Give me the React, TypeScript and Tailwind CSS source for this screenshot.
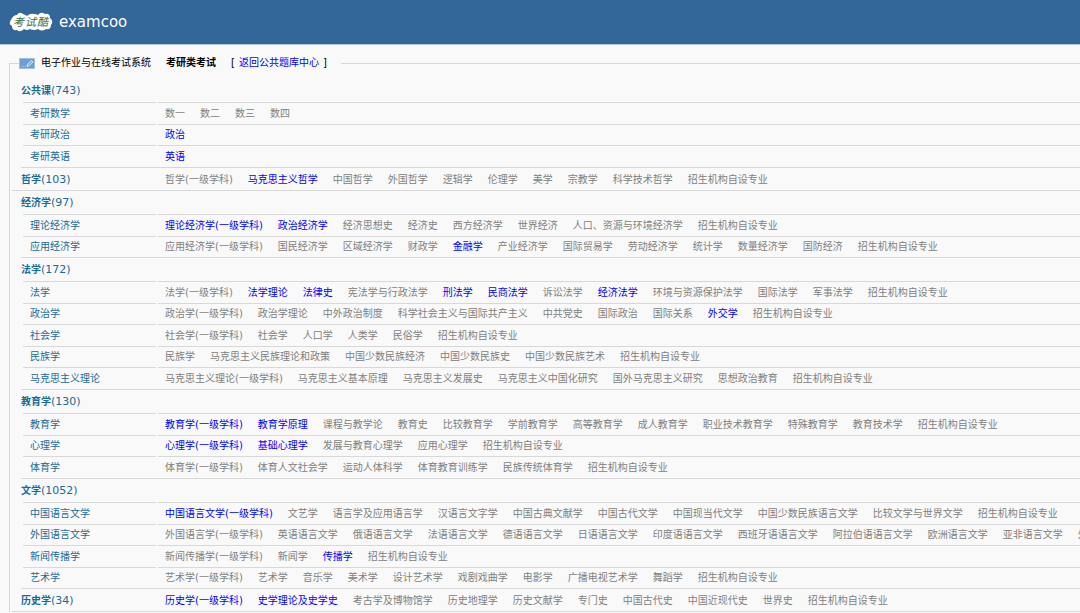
type Item = string;

type Category = {
  name: string;
  count: number;
  items?: Item[];
  subjects?: { name: string; items: Item[] }[];
};

// a leading * marks a subject that already has papers and can be opened
const categories: Category[] = [
  {
    name: "公共课",
    count: 743,
    subjects: [
      { name: "考研数学", items: ["数一", "数二", "数三", "数四"] },
      { name: "考研政治", items: ["*政治"] },
      { name: "考研英语", items: ["*英语"] },
    ],
  },
  {
    name: "哲学",
    count: 103,
    items: ["哲学(一级学科)", "*马克思主义哲学", "中国哲学", "外国哲学", "逻辑学", "伦理学", "美学", "宗教学", "科学技术哲学", "招生机构自设专业"],
  },
  {
    name: "经济学",
    count: 97,
    subjects: [
      {
        name: "理论经济学",
        items: ["*理论经济学(一级学科)", "*政治经济学", "经济思想史", "经济史", "西方经济学", "世界经济", "人口、资源与环境经济学", "招生机构自设专业"],
      },
      {
        name: "应用经济学",
        items: ["应用经济学(一级学科)", "国民经济学", "区域经济学", "财政学", "*金融学", "产业经济学", "国际贸易学", "劳动经济学", "统计学", "数量经济学", "国防经济", "招生机构自设专业"],
      },
    ],
  },
  {
    name: "法学",
    count: 172,
    subjects: [
      {
        name: "法学",
        items: ["法学(一级学科)", "*法学理论", "*法律史", "宪法学与行政法学", "*刑法学", "*民商法学", "诉讼法学", "*经济法学", "环境与资源保护法学", "国际法学", "军事法学", "招生机构自设专业"],
      },
      {
        name: "政治学",
        items: ["政治学(一级学科)", "政治学理论", "中外政治制度", "科学社会主义与国际共产主义", "中共党史", "国际政治", "国际关系", "*外交学", "招生机构自设专业"],
      },
      { name: "社会学", items: ["社会学(一级学科)", "社会学", "人口学", "人类学", "民俗学", "招生机构自设专业"] },
      {
        name: "民族学",
        items: ["民族学", "马克思主义民族理论和政策", "中国少数民族经济", "中国少数民族史", "中国少数民族艺术", "招生机构自设专业"],
      },
      {
        name: "马克思主义理论",
        items: ["马克思主义理论(一级学科)", "马克思主义基本原理", "马克思主义发展史", "马克思主义中国化研究", "国外马克思主义研究", "思想政治教育", "招生机构自设专业"],
      },
    ],
  },
  {
    name: "教育学",
    count: 130,
    subjects: [
      {
        name: "教育学",
        items: ["*教育学(一级学科)", "*教育学原理", "课程与教学论", "教育史", "比较教育学", "学前教育学", "高等教育学", "成人教育学", "职业技术教育学", "特殊教育学", "教育技术学", "招生机构自设专业"],
      },
      { name: "心理学", items: ["*心理学(一级学科)", "*基础心理学", "发展与教育心理学", "应用心理学", "招生机构自设专业"] },
      {
        name: "体育学",
        items: ["体育学(一级学科)", "体育人文社会学", "运动人体科学", "体育教育训练学", "民族传统体育学", "招生机构自设专业"],
      },
    ],
  },
  {
    name: "文学",
    count: 1052,
    subjects: [
      {
        name: "中国语言文学",
        items: ["*中国语言文学(一级学科)", "文艺学", "语言学及应用语言学", "汉语言文字学", "中国古典文献学", "中国古代文学", "中国现当代文学", "中国少数民族语言文学", "比较文学与世界文学", "招生机构自设专业"],
      },
      {
        name: "外国语言文学",
        items: ["外国语言学(一级学科)", "英语语言文学", "俄语语言文学", "法语语言文学", "德语语言文学", "日语语言文学", "印度语语言文学", "西班牙语语言文学", "阿拉伯语语言文学", "欧洲语言文学", "亚非语言文学", "外国语言学及应用语言学"],
      },
      { name: "新闻传播学", items: ["新闻传播学(一级学科)", "新闻学", "*传播学", "招生机构自设专业"] },
      {
        name: "艺术学",
        items: ["艺术学(一级学科)", "艺术学", "音乐学", "美术学", "设计艺术学", "戏剧戏曲学", "电影学", "广播电视艺术学", "舞蹈学", "招生机构自设专业"],
      },
    ],
  },
  {
    name: "历史学",
    count: 34,
    items: ["*历史学(一级学科)", "*史学理论及史学史", "考古学及博物馆学", "历史地理学", "历史文献学", "专门史", "中国古代史", "中国近现代史", "世界史", "招生机构自设专业"],
  },
];

function Logo() {
  return (
    <svg width="44" height="22" viewBox="0 0 44 22" role="img" aria-label="考试酷">
      <path
        d="M2 9Q4 4 8 4Q10 0 14 3Q17 4 18 5Q21 2 25 3Q28 3 29 4Q32 0 36 3Q41 2 41 7Q45 10 42 14Q42 19 37 18Q33 21 29 18Q25 20 21 18Q18 20 15 18Q11 22 8 19Q3 20 3 15Q-1 13 2 9Z"
        fill="#fff"
      />
      <g fill="#3c6b45" fontFamily="'Noto Sans CJK SC', serif" fontSize="11" fontStyle="italic">
        <text x="4" y="15">考</text>
        <text x="16" y="15">试</text>
        <text x="28" y="15">酷</text>
      </g>
    </svg>
  );
}

function PanelIcon() {
  return (
    <svg width="16" height="11" viewBox="0 0 16 11" aria-hidden="true">
      <rect x="0.5" y="0.5" width="15" height="10" fill="#6f9fd2" stroke="#a3c0de" />
      <path d="M8 8.500l.8-2.500 3.500-3.500 1.600 1.500-3.500 3.500z" fill="#7faada" stroke="#e8f1fa" strokeWidth="0.9" />
      <path d="M2.500 8.500h5" stroke="#8fb5dc" />
    </svg>
  );
}

function Items({ items }: { items: Item[] }) {
  return (
    <div className="flex gap-[15px] whitespace-nowrap">
      {items.map((item) =>
        item.startsWith("*") ? (
          <a key={item} href="#" className="text-[#0000ff]">
            {item.slice(1)}
          </a>
        ) : (
          <span key={item}>{item}</span>
        ),
      )}
    </div>
  );
}

function Title({ name, count }: { name: string; count: number }) {
  return (
    <a href="#" className="text-[#1a6a97]">
      <b>{name}</b>
      <span className="text-[11px]">({count})</span>
    </a>
  );
}

function CategoryBlock({ category }: { category: Category }) {
  if (category.items) {
    return (
      <section className="ml-0.5 flex h-[23px] items-center border-b border-[#d8d8d8] pt-0.5 pl-[9px]">
        <h2 className="w-36 shrink-0">
          <Title name={category.name} count={category.count} />
        </h2>
        <Items items={category.items} />
      </section>
    );
  }

  return (
    <section className="ml-[11px] border-b border-[#d8d8d8]">
      <h2 className="flex h-[23px] items-center">
        <Title name={category.name} count={category.count} />
      </h2>
      <table className="ml-0.5 w-full table-fixed border-separate border-spacing-0">
        <tbody>
          {category.subjects?.map((subject) => (
            <tr key={subject.name} className="odd:h-[22px] even:h-[21px]">
              <th scope="row" className="w-[133px] border-t border-[#d8d8d8] p-0 pl-[7px] text-left font-normal">
                <a href="#" className="text-[#1a6a97]">
                  {subject.name}
                </a>
              </th>
              <td className="w-0.5 p-0" />
              <td className="border-t border-[#d8d8d8] p-0 pl-[7px]">
                <Items items={subject.items} />
              </td>
            </tr>
          ))}
        </tbody>
      </table>
    </section>
  );
}

export default function App() {
  return (
    <div className="min-h-screen overflow-hidden bg-[#f9f9f9] font-['DejaVu_Sans','Noto_Sans_CJK_SC',sans-serif] text-[10px] leading-4 text-[#808080]">
      <header className="flex h-[45px] items-center gap-1.5 border-b border-[#b4c8dc] bg-[#336699] pl-[9px]">
        <Logo />
        <span className="text-[15px] leading-5 text-white">examcoo</span>
      </header>
      <main className="pt-[10px] pl-[9px]">
        <fieldset className="min-w-0 border-t border-l border-[#d8d8d8]">
          <legend className="ml-[9px] flex items-center pr-[14px] text-black">
            <PanelIcon />
            <span className="ml-1.5">电子作业与在线考试系统</span>
            <b className="ml-[15px]">考研类考试</b>
            <span className="ml-[15px] flex gap-1">
              [
              <a href="#" className="text-[#0000ff]">
                返回公共题库中心
              </a>
              ]
            </span>
          </legend>
          <div className="pt-2">
            {categories.map((category) => (
              <CategoryBlock key={category.name} category={category} />
            ))}
          </div>
        </fieldset>
      </main>
    </div>
  );
}
